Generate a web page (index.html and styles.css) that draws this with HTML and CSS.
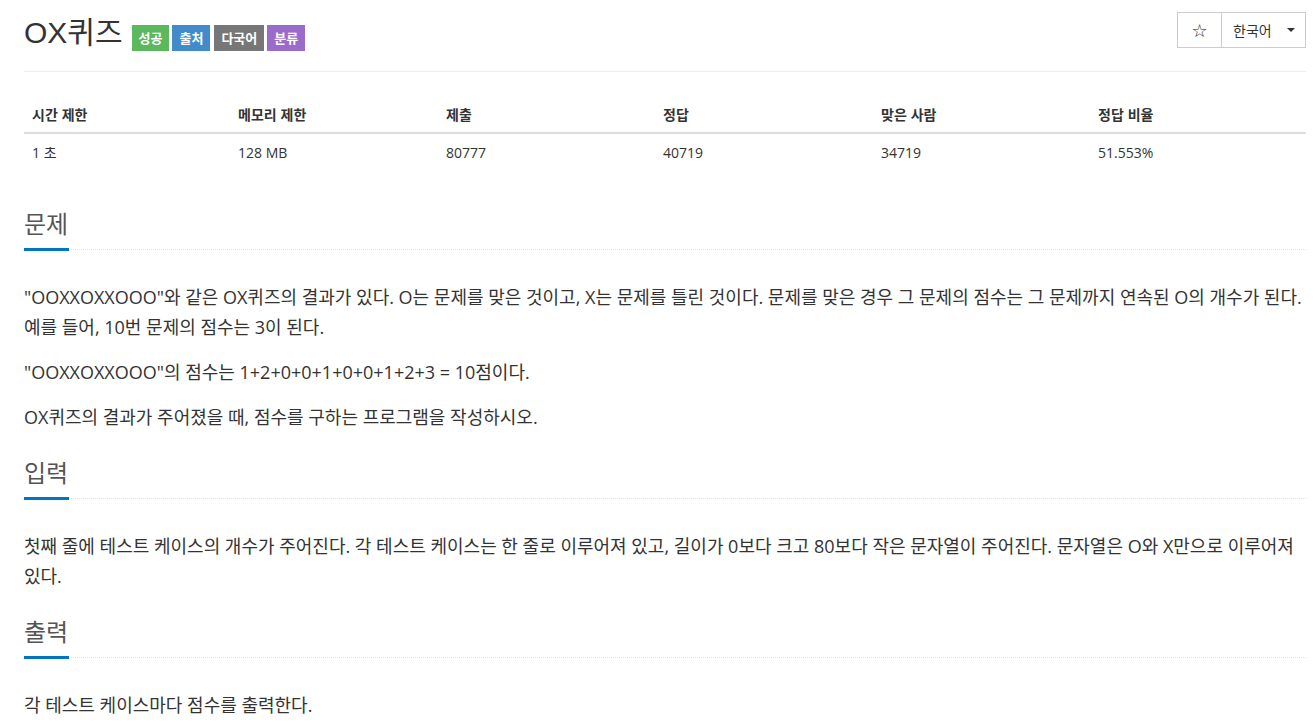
FILE: index.html
```html
<!DOCTYPE html>
<html lang="ko">
<head>
<meta charset="utf-8">
<title>OX퀴즈</title>
<link rel="stylesheet" href="styles.css">
</head>
<body>
<div class="page">
  <div class="page-header">
    <div class="title-wrap">
      <h1 class="title">OX퀴즈</h1>
      <span class="badge badge-green">성공</span>
      <span class="badge badge-blue">출처</span>
      <span class="badge badge-gray">다국어</span>
      <span class="badge badge-purple">분류</span>
    </div>
    <div class="btn-group">
      <button class="btn btn-star">☆</button>
      <button class="btn btn-lang">한국어 <span class="caret"></span></button>
    </div>
  </div>

  <table class="info-table">
    <colgroup>
      <col class="c1"><col class="c2"><col class="c3"><col class="c4"><col class="c5"><col class="c6">
    </colgroup>
    <thead>
      <tr><th>시간 제한</th><th>메모리 제한</th><th>제출</th><th>정답</th><th>맞은 사람</th><th>정답 비율</th></tr>
    </thead>
    <tbody>
      <tr><td>1 초</td><td>128 MB</td><td>80777</td><td>40719</td><td>34719</td><td>51.553%</td></tr>
    </tbody>
  </table>

  <section class="problem-section">
    <div class="headline"><h2>문제</h2></div>
    <div class="problem-text">
      <p>"OOXXOXXOOO"와 같은 OX퀴즈의 결과가 있다. O는 문제를 맞은 것이고, X는 문제를 틀린 것이다. 문제를 맞은 경우 그 문제의 점수는 그 문제까지 연속된 O의 개수가 된다. 예를 들어, 10번 문제의 점수는 3이 된다.</p>
      <p>"OOXXOXXOOO"의 점수는 1+2+0+0+1+0+0+1+2+3 = 10점이다.</p>
      <p>OX퀴즈의 결과가 주어졌을 때, 점수를 구하는 프로그램을 작성하시오.</p>
    </div>
  </section>

  <section class="problem-section">
    <div class="headline"><h2>입력</h2></div>
    <div class="problem-text">
      <p>첫째 줄에 테스트 케이스의 개수가 주어진다. 각 테스트 케이스는 한 줄로 이루어져 있고, 길이가 0보다 크고 80보다 작은 문자열이 주어진다. 문자열은 O와 X만으로 이루어져 있다.</p>
    </div>
  </section>

  <section class="problem-section">
    <div class="headline"><h2>출력</h2></div>
    <div class="problem-text">
      <p>각 테스트 케이스마다 점수를 출력한다.</p>
    </div>
  </section>
</div>
</body>
</html>
```

FILE: styles.css
```css
html, body {
  margin: 0;
  padding: 0;
  background: #fff;
}
body {
  font-family: "Open Sans", "Noto Sans CJK KR", sans-serif;
  color: #333;
  font-size: 14px;
  line-height: 20px;
}
.page {
  width: 1282px;
  margin-left: 24px;
}
.page-header {
  display: flex;
  justify-content: space-between;
  align-items: flex-start;
  border-bottom: 1px solid #eee;
  padding-top: 12px;
  height: 72px;
  box-sizing: border-box;
}
.title-wrap {
  display: flex;
  align-items: center;
  padding-top: 2px;
}
.title {
  margin: 0 9px 0 0;
  font-family: "Liberation Sans", "Noto Sans CJK KR", sans-serif;
  font-weight: 400;
  font-size: 30px;
  line-height: 38px;
  color: #333;
}
.badge {
  display: inline-block;
  height: 26px;
  line-height: 26px;
  padding: 0 7px;
  margin-right: 3px;
  margin-top: 9px;
  font-family: "Noto Sans CJK KR", sans-serif;
  font-size: 13px;
  font-weight: 700;
  color: #fff;
}
.badge-blue { margin-right: 4px; }
.badge-green { background: #5cb85c; }
.badge-blue { background: #428bca; }
.badge-gray { background: #777; }
.badge-purple { background: #9b6bcc; }

.btn-group {
  display: flex;
}
.btn {
  height: 36px;
  border: 1px solid #ccc;
  background: #fff;
  color: #333;
  font-family: "Noto Sans CJK KR", sans-serif;
  font-size: 14px;
  padding: 0;
  margin: 0;
}
.btn-star {
  width: 45px;
  font-family: "DejaVu Sans", sans-serif;
  font-size: 18px;
  color: #222;
}
.btn-lang {
  width: 85px;
  margin-left: -1px;
  display: flex;
  align-items: center;
  justify-content: flex-start;
  padding-left: 11px;
}
.caret {
  display: inline-block;
  width: 0;
  height: 0;
  border-left: 4px solid transparent;
  border-right: 4px solid transparent;
  border-top: 4px solid #333;
  margin-left: 15px;
}

.info-table {
  width: 1282px;
  border-collapse: collapse;
  margin-top: 24px;
  table-layout: fixed;
}
.c1 { width: 206px; }
.c2 { width: 208px; }
.c3 { width: 217px; }
.c4 { width: 218px; }
.c5 { width: 217px; }
.c6 { width: 216px; }
.info-table th {
  text-align: left;
  font-weight: 700;
  font-size: 14px;
  padding: 8px;
  line-height: 20px;
  border-bottom: 2px solid #ddd;
  font-family: "Noto Sans CJK KR", sans-serif;
}
.info-table td {
  text-align: left;
  font-size: 14px;
  padding: 8px;
  line-height: 22px;
}

.info-table + .problem-section {
  margin-top: 34px;
}
.headline {
  display: flex;
  align-items: flex-end;
  border-bottom: 1px dotted #dfe3ef;
  margin-bottom: 32px;
}
.headline h2 {
  margin: 0 0 -2px 0;
  font-weight: 400;
  font-size: 24px;
  line-height: 33px;
  padding: 0 1px 9px 0;
  color: #555;
  border-bottom: 3px solid #0076c0;
  font-family: "Noto Sans CJK KR", sans-serif;
}
.problem-text p {
  margin: 0 0 15px 0;
  font-size: 18px;
  line-height: 30px;
  color: #333;
}
.problem-text {
  margin-bottom: 23px;
}
```
